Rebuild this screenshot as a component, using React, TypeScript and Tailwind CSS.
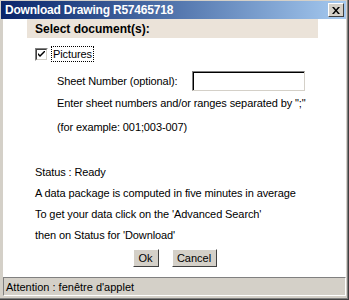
import React from "react";

export default function App() {
  const txt = "text-[11px] leading-[14px] text-black tracking-[-0.1px]";
  return (
    <div
      className="w-[349px] h-[300px] bg-[#d4d0c8] flex flex-col border-r border-b border-[#404040] overflow-hidden"
      style={{ fontFamily: '"Liberation Sans", Arial, sans-serif' }}
    >
      <div className="flex-1 flex flex-col border-r border-b border-[#808080]">
        {/* Title bar */}
        <div className="mt-[1px] ml-[1px] mr-[1px] h-[18px] flex items-center justify-between bg-gradient-to-r from-[#0a246a] to-[#a6caf0] pl-[4px] pr-[2px]">
          <span className="text-white font-bold text-[12px] leading-[14px] tracking-[-0.2px]">
            Download Drawing R57465718
          </span>
          <div className="w-[16px] h-[14px] bg-[#d4d0c8] border-t border-l border-white border-r border-b border-r-[#404040] border-b-[#404040] flex items-center justify-center">
            <svg width="8" height="7" viewBox="0 0 8 7">
              <path d="M0 0h2l2 2.5L6 0h2L5 3.5 8 7H6L4 4.5 2 7H0l3-3.5z" fill="#000" />
            </svg>
          </div>
        </div>
        {/* Content */}
        <div className="ml-[3px] mr-[1px] flex-1 bg-white flex flex-col">
          <div className="ml-[24px] w-[291px] h-[19px] bg-[#ebe3d9] flex items-center pl-[8px]">
            <span className="font-bold text-[12px] leading-[14px] text-black">Select document(s):</span>
          </div>
          <div className="mt-[8px] ml-[32px] h-[16px] flex items-center">
            <div className="w-[13px] h-[13px] border-t border-l border-[#808080] border-r border-b border-r-white border-b-white bg-[#d4d0c8] p-0">
              <div className="w-full h-full border-t border-l border-[#404040] border-r border-b border-r-[#d4d0c8] border-b-[#d4d0c8] bg-white flex items-center justify-center">
                <svg width="7" height="7" viewBox="0 0 7 7">
                  <path d="M0 2v2l2 2 5-5V-1L2 4z" fill="#000" />
                </svg>
              </div>
            </div>
            <span className={`${txt} ml-[3px] px-[1px] border border-dotted border-black`}>Pictures</span>
          </div>
          <div className="mt-[9px] ml-[54px] h-[20px] flex items-center">
            <span className={txt}>Sheet Number (optional):</span>
            <div className="ml-[14px] w-[113px] h-[20px] border-t border-l border-[#808080] border-r border-b border-r-[#d4d0c8] border-b-[#d4d0c8]">
              <div className="w-full h-full border-t border-l border-[#000] bg-white"></div>
            </div>
          </div>
          <div className={`mt-[5px] ml-[54px] ${txt}`}>
            Enter sheet numbers and/or ranges separated by ";"
          </div>
          <div className={`mt-[10px] ml-[54px] ${txt}`}>(for example: 001;003-007)</div>
          <div className={`mt-[31px] ml-[32px] ${txt}`}>Status : Ready</div>
          <div className={`mt-[7px] ml-[32px] ${txt}`}>
            A data package is computed in five minutes in average
          </div>
          <div className={`mt-[7px] ml-[32px] ${txt}`}>
            To get your data click on the 'Advanced Search'
          </div>
          <div className={`mt-[7px] ml-[32px] ${txt}`}>then on Status for 'Download'</div>
          <div className="mt-[7px] flex justify-center gap-[13px]">
            <button className="w-[26px] h-[18px] bg-[#d4d0c8] border-t border-l border-white border-r border-b border-r-[#404040] border-b-[#404040] text-[11px] leading-[14px] text-black">
              Ok
            </button>
            <button className="w-[45px] h-[18px] bg-[#d4d0c8] border-t border-l border-white border-r border-b border-r-[#404040] border-b-[#404040] text-[11px] leading-[14px] text-black">
              Cancel
            </button>
          </div>
        </div>
        {/* Status bar */}
        <div className="ml-[3px] mr-[1px] h-[19px] bg-[#d4d0c8] border-t border-l border-[#808080] border-r border-b border-r-white border-b-white flex items-center pl-[2px]">
          <span className="text-[11px] leading-[14px] text-black">Attention : fenêtre d'applet</span>
        </div>
        <div className="h-[2px]"></div>
      </div>
    </div>
  );
}
